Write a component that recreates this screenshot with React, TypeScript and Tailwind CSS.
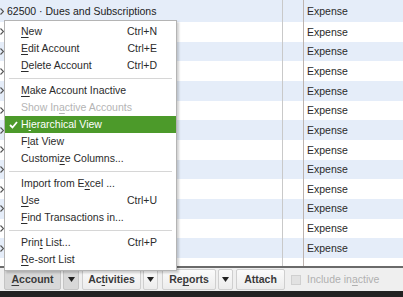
import { ReactNode } from 'react';

const FONT = { fontFamily: '"Liberation Sans", Arial, sans-serif' };

type Item = { label: ReactNode; shortcut?: string; disabled?: boolean; active?: boolean } | 'sep';

const U = ({ children }: { children: ReactNode }) => <span className="underline underline-offset-[1.5px]">{children}</span>;

const menuItems: Item[] = [
  { label: <><U>N</U>ew</>, shortcut: 'Ctrl+N' },
  { label: <><U>E</U>dit Account</>, shortcut: 'Ctrl+E' },
  { label: <><U>D</U>elete Account</>, shortcut: 'Ctrl+D' },
  'sep',
  { label: <><U>M</U>ake Account Inactive</> },
  { label: <>Show In<U>a</U>ctive Accounts</>, disabled: true },
  { label: <>H<U>i</U>erarchical View</>, active: true },
  { label: <>F<U>l</U>at View</> },
  { label: <>Customi<U>z</U>e Columns...</> },
  'sep',
  { label: <>Import from E<U>x</U>cel ...</> },
  { label: <><U>U</U>se</>, shortcut: 'Ctrl+U' },
  { label: <><U>F</U>ind Transactions in...</> },
  'sep',
  { label: <>Prin<U>t</U> List...</>, shortcut: 'Ctrl+P' },
  { label: <><U>R</U>e-sort List</> },
];

const Arrow = () => (
  <svg width="4" height="7" viewBox="0 0 4 7" className="shrink-0">
    <path d="M0.5 0.5 L3.5 3.5 L0.5 6.5" fill="none" stroke="#555" strokeWidth="1.2" />
  </svg>
);

const Caret = () => (
  <svg width="7" height="5" viewBox="0 0 7 5">
    <path d="M0 0 H7 L3.5 5 Z" fill="#222" />
  </svg>
);

const Row = ({ idx, children, first }: { idx: number; children?: ReactNode; first?: boolean }) => (
  <div className={`flex shrink-0 ${first ? 'h-[22px]' : 'h-[19.67px]'} ${idx % 2 === 0 ? 'bg-[#e5edf9]' : 'bg-white'}`}>
    <div className="w-[283px] flex items-center border-r border-[#c9c9c9] pl-0">
      <Arrow />
      <span className="ml-[3px] text-[#222]">{children}</span>
    </div>
    <div className="w-[21px] border-r border-[#bdb4b0]" />
    <div className="flex-1 flex items-center pl-[3px] text-[#2a2a2a]">Expense</div>
  </div>
);

const Btn = ({ children, pressed, className = '' }: { children: ReactNode; pressed?: boolean; className?: string }) => (
  <div
    className={`h-[21px] flex items-center justify-center border rounded-[2px] font-bold text-[#3a3a3a] ${
      pressed ? 'bg-[#d8d8d8] border-[#c4c4c4]' : 'bg-gradient-to-b from-[#fbfbfb] to-[#ececec] border-[#cfcfcf]'
    } ${className}`}
  >
    {children}
  </div>
);

export default function App() {
  return (
    <div className="relative w-[403px] h-[297px] overflow-hidden bg-white text-[10.5px] leading-none flex flex-col" style={FONT}>
      {/* account list */}
      <div className="h-[266px] flex flex-col overflow-hidden">
        {Array.from({ length: 13 }).map((_, i) => (
          <Row key={i} idx={i} first={i === 0}>
            {i === 0 ? '62500 · Dues and Subscriptions' : null}
          </Row>
        ))}
        <div className="flex flex-1 bg-white">
          <div className="w-[283px] border-r border-[#c9c9c9]" />
          <div className="w-[21px] border-r border-[#bdb4b0]" />
        </div>
      </div>

      {/* toolbar */}
      <div className="h-[25px] border-t-2 border-[#6a6a6a] bg-[#efefef] flex items-center pl-[4px] gap-[2px]">
        <Btn pressed className="w-[57px]"><span><U>A</U>ccount</span></Btn>
        <Btn pressed className="w-[16px]"><Caret /></Btn>
        <Btn className="w-[59px] ml-[1px]"><span>Ac<U>t</U>ivities</span></Btn>
        <Btn className="w-[15px]"><Caret /></Btn>
        <Btn className="w-[54px] ml-[2px]"><span>Re<U>p</U>orts</span></Btn>
        <Btn className="w-[15px]"><Caret /></Btn>
        <Btn className="w-[49px] ml-[1px]">Attach</Btn>
        <div className="ml-[4px] w-[10px] h-[10px] border border-[#d0d0d0] bg-[#e2e2e2]" />
        <span className="ml-[4px] text-[#b0b0b0]">Include in<U>a</U>ctive</span>
      </div>
      <div className="flex-1 bg-[#222222]" />

      {/* Account menu */}
      <div className="absolute left-[4px] top-[20px] w-[173px] bg-white border border-[#b4b4b4] shadow-[2px_2px_2px_rgba(0,0,0,0.18)] py-[2px]">
        {menuItems.map((it, i) =>
          it === 'sep' ? (
            <div key={i} className="h-[8px] flex items-center px-[4px]">
              <div className="h-px w-full bg-[#d6d6d6]" />
            </div>
          ) : (
            <div
              key={i}
              className={`relative h-[17px] flex items-center pl-[16px] pr-[19px] ${
                it.active ? 'bg-[#4c9a2a] text-white' : it.disabled ? 'text-[#b4b4b4]' : 'text-[#2b2b2b]'
              }`}
            >
              {it.active && (
                <svg width="9" height="8" viewBox="0 0 9 8" className="absolute left-[4px] top-[5px]">
                  <path d="M1 4 L3.5 6.5 L8 1" fill="none" stroke="white" strokeWidth="1.8" />
                </svg>
              )}
              <span className="flex-1">{it.label}</span>
              {it.shortcut && <span>{it.shortcut}</span>}
            </div>
          )
        )}
      </div>
    </div>
  );
}
